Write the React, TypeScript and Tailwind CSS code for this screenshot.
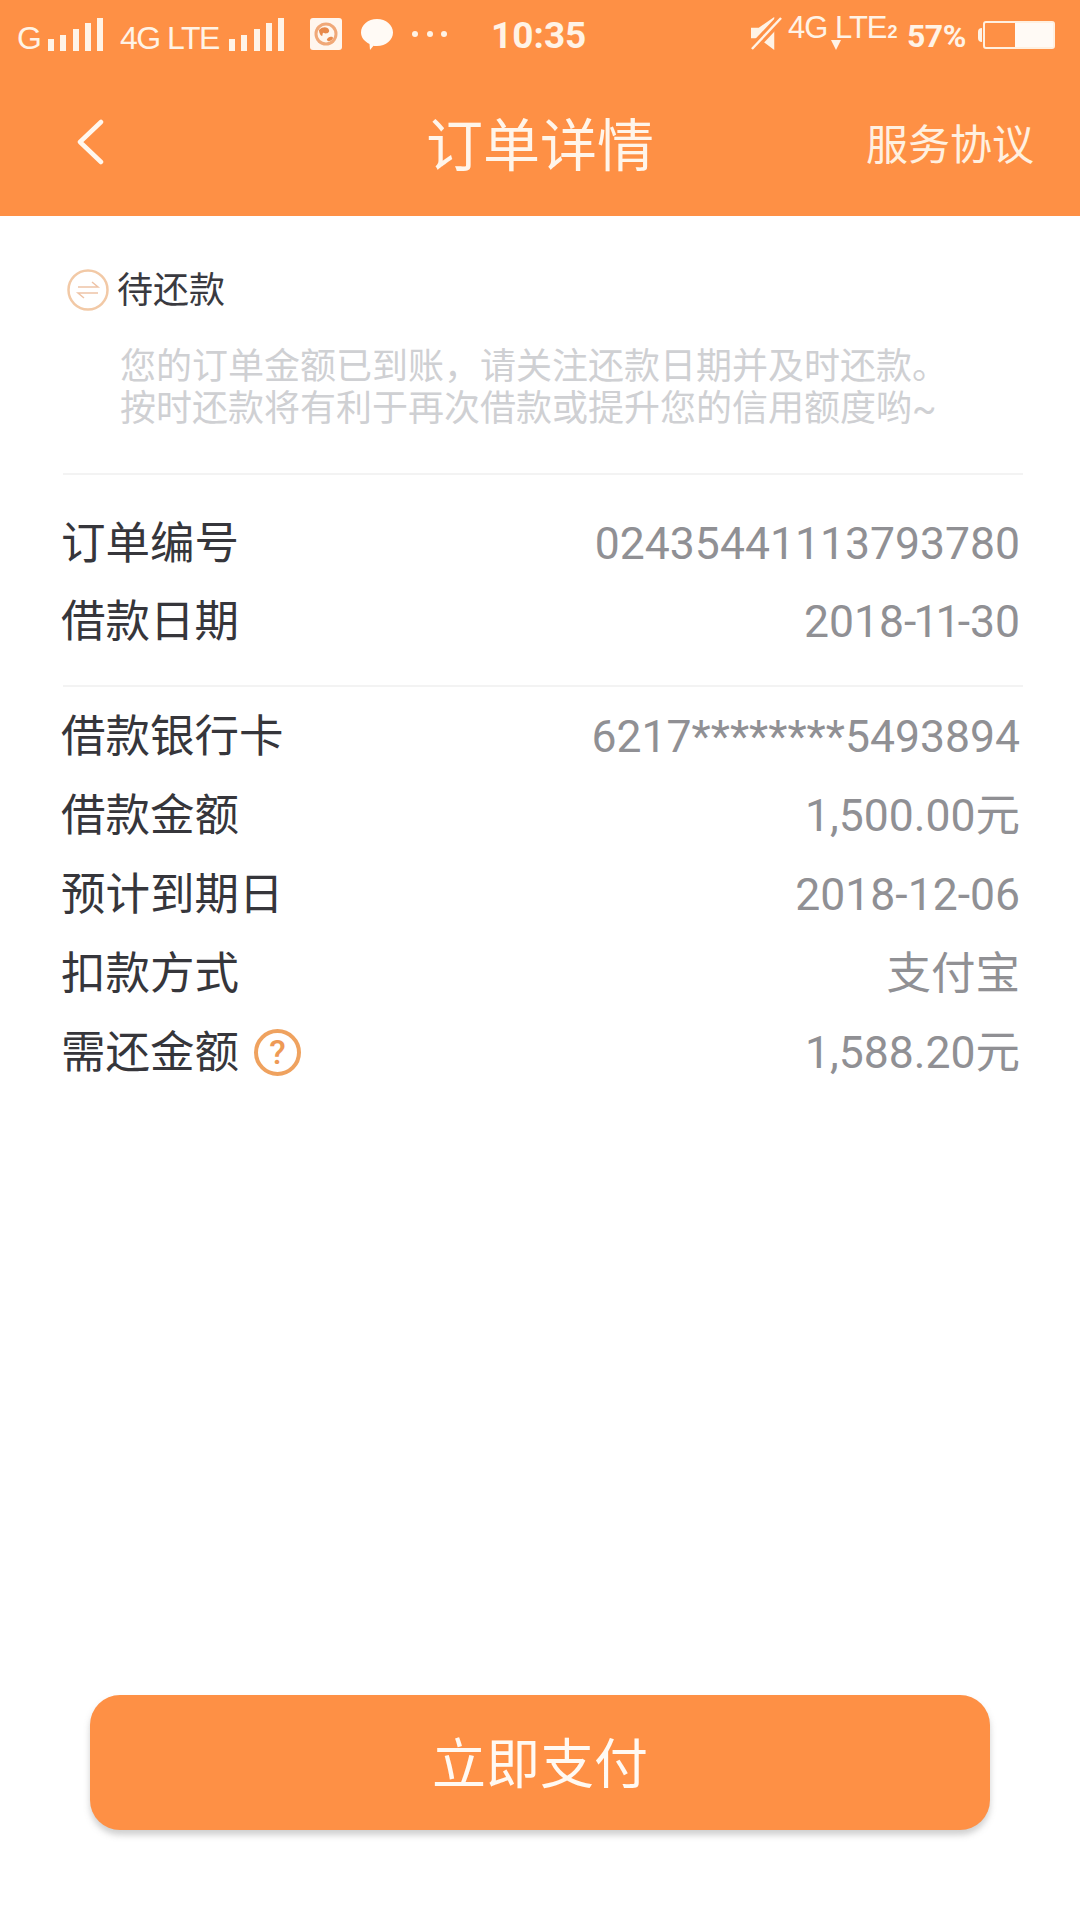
const FONT = "font-['Roboto','Noto_Sans_CJK_SC',sans-serif]";

function Signal({ className }: { className?: string }) {
  return (
    <svg viewBox="0 0 55 33" className={className} fill="#fff3e6">
      <rect x="0" y="21" width="6" height="12" />
      <rect x="12" y="17" width="6" height="16" />
      <rect x="25" y="11" width="6" height="22" />
      <rect x="37" y="5" width="6" height="28" />
      <rect x="49" y="0" width="6" height="33" />
    </svg>
  );
}

function StatusBar() {
  return (
    <div className="h-[70px] flex items-center text-[#fff3e6] pl-[17px]">
      <span className="text-[32px] leading-none w-[31px] mt-[6px] font-['Liberation_Sans',sans-serif]">G</span>
      <Signal className="w-[55px] h-[33px] mt-[-2px]" />
      <span className="ml-[17px] w-[109px] text-[32px] leading-none tracking-[-1.5px] mt-[6px] font-['Liberation_Sans',sans-serif]">4G LTE</span>
      <Signal className="w-[55px] h-[33px] mt-[-2px]" />
      <svg viewBox="0 0 32 32" className="ml-[26px] w-[32px] h-[32px] mt-[-2px]">
        <rect width="32" height="32" rx="3" fill="#fff6ee" />
        <circle cx="16" cy="16" r="11.500" fill="#f0a878" />
        <circle cx="16" cy="16" r="8.500" fill="#fff6ee" />
        <path d="M9 12c4-4 9-3 10 0s-3 4-5 3-1 3-2 3-3-3-3-6zM18 20c3-2 5-1 5 0s-3 4-5 3-1-2 0-3z" fill="#e88a4c" />
      </svg>
      <svg viewBox="0 0 32 31" className="ml-[19px] w-[32px] h-[31px] mt-[-1px]">
        <path d="M16 0C25 0 32 6 32 13.500S25 27 16 27c-1.500 0-2.500 0-3.500-.3L9 31l-.5-6C3.500 22.500 0 18.500 0 13.500 0 6 7 0 16 0z" fill="#fffaf5" />
      </svg>
      <div className="ml-[19px] w-[35px] flex justify-between mt-[-2px]">
        <span className="size-[6px] rounded-full bg-[#fff3e6]" />
        <span className="size-[6px] rounded-full bg-[#fff3e6]" />
        <span className="size-[6px] rounded-full bg-[#fff3e6]" />
      </div>
      <span className="ml-[44px] w-[260px] text-[37px] leading-none font-bold mt-[1px] font-['Roboto',sans-serif]">10:35</span>
      <svg viewBox="0 0 32 34" className="w-[31px] h-[33px] mt-[-3px]">
        <path d="M0 11h8L24 0v34L8 22H0z" fill="#fff3e6" />
        <path d="M0 34L32 0" stroke="#fe9045" strokeWidth="9" />
        <path d="M1 33L31 1" stroke="#fff3e6" strokeWidth="2.500" />
      </svg>
      <div className="relative ml-[6px] w-[111px] h-[34px] mt-[-12px]">
        <span className="text-[31px] leading-none tracking-[-1px] font-['Liberation_Sans',sans-serif]">
          4G LTE<span className="text-[18px] font-bold ml-[1px]">2</span>
        </span>
        <span className="absolute left-[43px] top-[28px] w-0 h-0 border-x-[5px] border-x-transparent border-t-[10px] border-t-[#fff3e6]" />
      </div>
      <span className="ml-[8px] w-[71px] text-[32px] leading-none font-bold mt-[1px] tracking-[-0.5px] font-['Roboto',sans-serif]">57%</span>
      <span className="w-[4px] h-[14px] rounded-l-sm bg-[#fff3e6] mt-[-1px]" />
      <div className="ml-[1px] w-[72px] h-[28px] rounded-[3px] border-2 border-[#fff0e0] flex justify-end mt-[-1px]">
        <span className="w-[38px] bg-[#fffaf5]" />
      </div>
    </div>
  );
}

function NavBar() {
  return (
    <div className="h-[146px] relative flex items-center justify-center pt-[6px]">
      <svg viewBox="0 0 28 46" className="absolute left-[76px] top-[49px] w-[28px] h-[46px]" fill="none">
        <path d="M25 3L4 23l21 20" stroke="#fff7ee" strokeWidth="4.500" strokeLinecap="round" strokeLinejoin="round" />
      </svg>
      <h1 className="text-[57px] leading-none font-normal text-[#fff5ea]">订单详情</h1>
      <span className="absolute right-[46px] top-[55px] text-[42px] leading-none font-normal text-[#fff0e0]">服务协议</span>
    </div>
  );
}

function Row({ label, value, h = "h-[79px]", children }: { label: string; value: React.ReactNode; h?: string; children?: React.ReactNode }) {
  return (
    <div className={`${h} flex items-center justify-between`}>
      <div className="flex items-center text-[44.500px] text-[#36363b]">
        {label}
        {children}
      </div>
      <span className="text-[44.500px] text-[#909094]">{value}</span>
    </div>
  );
}

export default function App() {
  return (
    <div className={`${FONT} w-[1080px] h-[1920px] bg-white flex flex-col overflow-hidden`}>
      <header className="bg-[#fe9045]">
        <StatusBar />
        <NavBar />
      </header>

      <section className="pt-[53px] pl-[61px] pr-[60px]">
        <div className="flex items-center h-[44px]">
          <svg viewBox="0 0 42 42" className="ml-[6px] mt-[-3px] w-[42px] h-[42px]" fill="none">
            <circle cx="21" cy="21" r="19.500" stroke="#f2c9a6" strokeWidth="2.500" />
            <path d="M11 18h20l-6-5M31 24H11l6 5" stroke="#eec3a6" strokeWidth="1.500" />
          </svg>
          <span className="ml-[8px] text-[36px] leading-none text-[#3a3a40]">待还款</span>
        </div>
        <p className="mt-[33px] ml-[59px] text-[36px] leading-[42px] text-[#cfd0d3] whitespace-nowrap">
          您的订单金额已到账，请关注还款日期并及时还款。
          <br />
          按时还款将有利于再次借款或提升您的信用额度哟~
        </p>
        <div className="mt-[43px] ml-[2px] mr-[-3px] h-[2px] bg-[#f3f3f3]" />
        <div className="mt-[31px]">
          <Row label="订单编号" value="02435441113793780" h="h-[77px]" />
          <Row
            label="借款日期"
            value={
              <>
                2018<span className="tracking-[-2.900px]">-11</span>-30
              </>
            }
          />
        </div>
        <div className="mt-[23px] ml-[2px] mr-[-3px] h-[2px] bg-[#f3f3f3]" />
        <div className="mt-[11px]">
          <Row label="借款银行卡" value="6217********5493894" />
          <Row label="借款金额" value="1,500.00元" />
          <Row label="预计到期日" value="2018-12-06" />
          <Row label="扣款方式" value="支付宝" />
          <Row label="需还金额" value="1,588.20元">
            <span className="ml-[15px] mt-[-3px] size-[47px] rounded-full border-[4px] border-[#efa25f] flex items-center justify-center text-[34px] leading-none font-medium text-[#ee9a55]">
              ?
            </span>
          </Row>
        </div>
      </section>

      <div className="mt-auto mb-[90px] mx-[90px]">
        <button className="w-full h-[135px] rounded-[30px] bg-[#fe9045] shadow-[0_5px_6px_rgba(120,120,120,0.35)] text-[54px] font-normal text-[#fff9f2] flex items-center justify-center pt-[5px]">
          立即支付
        </button>
      </div>
    </div>
  );
}
